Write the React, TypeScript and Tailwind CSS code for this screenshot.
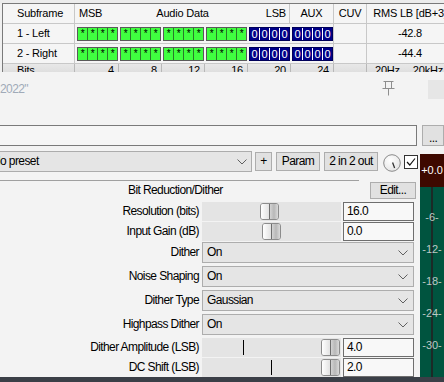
import React from "react";

const TF = "font-['Liberation_Sans',Arial,sans-serif]";

function BitGroup({ kind }: { kind: "g" | "b" }) {
  const green = kind === "g";
  return (
    <div
      className={`flex h-[14px] w-[41px] border ${
        green ? "border-[#5a5a5a]" : "border-[#00005a]"
      }`}
    >
      {[0, 1, 2, 3].map((i) => (
        <div
          key={i}
          className={`flex-1 flex justify-center ${
            i > 0 ? (green ? "border-l border-[#2a7a2a]" : "border-l border-white") : ""
          } ${
            green
              ? "bg-[#40ff40] text-black text-[10px] leading-[11px]"
              : "bg-[#000088] text-white text-[11px] leading-[12px]"
          }`}
        >
          {green ? "*" : "0"}
        </div>
      ))}
    </div>
  );
}

function DataRow({ name, rms }: { name: string; rms: string }) {
  return (
    <div className="flex h-[20px] border-b border-[#c8c8c8]">
      <div className="w-[72px] border-r border-[#c8c8c8] flex items-center pl-[14px]">{name}</div>
      <div className="w-[259px] border-r border-[#c8c8c8] flex items-center pl-[2px] gap-[2px]">
        <BitGroup kind="g" />
        <BitGroup kind="g" />
        <BitGroup kind="g" />
        <BitGroup kind="g" />
        <BitGroup kind="b" />
        <BitGroup kind="b" />
      </div>
      <div className="w-[33px] border-r border-[#c8c8c8]" />
      <div className="w-[86px] flex items-center justify-center">{rms}</div>
    </div>
  );
}

function Chevron() {
  return (
    <svg width="10" height="6" viewBox="0 0 10 6" className="shrink-0">
      <polyline points="0.5,0.5 5,5 9.5,0.5" fill="none" stroke="#606060" strokeWidth="1" />
    </svg>
  );
}

function Thumb({ left }: { left: number }) {
  return (
    <div
      className="absolute top-[1px] w-[19px] h-[17px] rounded-[3px] border border-[#8c8c8c] flex overflow-hidden"
      style={{ left }}
    >
      <div className="flex-1 bg-gradient-to-r from-[#ffffff] to-[#e2e2e2]" />
      <div className="w-[1px] bg-[#6e6e6e]" />
      <div className="flex-1 bg-gradient-to-r from-[#d4d4d4] via-[#b8b8b8] to-[#dadada]" />
    </div>
  );
}

function SliderRow({
  label,
  value,
  thumb,
  tick,
  mt,
}: {
  label: string;
  value: string;
  thumb: number;
  tick?: number;
  mt: string;
}) {
  return (
    <div className={`flex h-[19px] items-center ${mt}`}>
      <div className="w-[199px] text-right whitespace-nowrap leading-[19px]">{label}</div>
      <div className="ml-[3px] w-[139px] h-[19px] bg-[#e4e4e4] relative">
        {tick !== undefined && (
          <div className="absolute top-[2px] h-[15px] w-[1px] bg-black" style={{ left: tick }} />
        )}
        <Thumb left={thumb} />
      </div>
      <div className="ml-[2px] w-[71px] h-[19px] border border-[#6e6e6e] bg-[#f8f8f8] pl-[3px] leading-[17px]">
        {value}
      </div>
    </div>
  );
}

function SelectRow({ label, value, mt }: { label: string; value: string; mt: string }) {
  return (
    <div className={`flex h-[21px] items-center ${mt}`}>
      <div className="w-[199px] text-right whitespace-nowrap leading-[21px]">{label}</div>
      <div className="ml-[3px] w-[212px] h-[21px] border border-[#adadad] bg-[#e5e5e5] pl-[4px] pr-[5px] flex items-center justify-between">
        <span className="leading-[19px]">{value}</span>
        <Chevron />
      </div>
    </div>
  );
}

function Btn({ children, w, cls = "" }: { children: React.ReactNode; w: string; cls?: string }) {
  return (
    <div
      className={`${w} h-[19px] border border-[#adadad] bg-[#e1e1e1] flex items-center justify-center leading-[17px] whitespace-nowrap ${cls}`}
    >
      {children}
    </div>
  );
}

export default function App() {
  return (
    <div className={`w-[444px] h-[382px] overflow-hidden bg-[#f3f3f3] ${TF} text-black`}>
      {/* Top table */}
      <div className="h-[72px] overflow-hidden bg-[#f0f0f0]">
        <div className="h-[3px] bg-[#ececec]" />
        <div className="ml-[2px] w-[520px] border-l border-t border-[#7a7a7a] text-[11px] tracking-[-0.2px] bg-[#f5f5f5]">
          <div className="flex h-[20px] border-b border-[#c8c8c8]">
            <div className="w-[72px] border-r border-[#c8c8c8] flex items-center pl-[14px]">Subframe</div>
            <div className="w-[215px] border-r border-[#c8c8c8] flex items-center px-[3px]">
              <span className="flex-1 pl-[1px]">MSB</span>
              <span>Audio Data</span>
              <span className="flex-1 text-right">LSB</span>
            </div>
            <div className="w-[44px] border-r border-[#c8c8c8] flex items-center justify-center">AUX</div>
            <div className="w-[33px] border-r border-[#c8c8c8] flex items-center justify-center">CUV</div>
            <div className="w-[86px] flex items-center justify-center whitespace-nowrap">RMS LB [dB+3]</div>
          </div>
          <DataRow name="1 - Left" rms="-42.8" />
          <DataRow name="2 - Right" rms="-44.4" />
          <div className="flex h-[14px] bg-gradient-to-b from-[#e8e8e8] to-[#d8d8d8] leading-[13px]">
            <div className="w-[72px] border-r border-[#b8b8b8] pl-[14px]">Bits</div>
            <div className="w-[44px] border-r border-[#b8b8b8] text-right pr-[4px]">4</div>
            <div className="w-[43px] border-r border-[#b8b8b8] text-right pr-[4px]">8</div>
            <div className="w-[43px] border-r border-[#b8b8b8] text-right pr-[4px]">12</div>
            <div className="w-[43px] border-r border-[#b8b8b8] text-right pr-[4px]">16</div>
            <div className="w-[43px] border-r border-[#b8b8b8] text-right pr-[4px]">20</div>
            <div className="w-[43px] border-r border-[#b8b8b8] text-right pr-[4px]">24</div>
            <div className="w-[33px] border-r border-[#b8b8b8]" />
            <div className="w-[86px] flex justify-between pl-[8px] pr-[10px]">
              <span>20Hz</span>
              <span>20kHz</span>
            </div>
          </div>
        </div>
      </div>

      {/* Plugin window */}
      <div className="h-[310px] flex flex-col bg-[#f3f3f3] text-[12px] tracking-[-0.6px]">
        <div className="h-[34px] flex items-start">
          <div className="w-[60px] mt-[10px] leading-[14px] text-[#a0aab8]">2022"</div>
          <svg className="ml-[321px] mt-[8px]" width="15" height="16" viewBox="0 0 15 16">
            <g fill="none" stroke="#8e8e8e" strokeWidth="1">
              <path d="M2.5 1.5 H12.5" />
              <path d="M4.5 1.5 V8.5 M10.5 1.5 V8.5" />
              <path d="M1.5 8.5 H13.5" />
              <path d="M7.5 8.5 V15.5" />
            </g>
          </svg>
          <div className="ml-[32px] mt-[8px] w-[16px] h-[19px] bg-[#e6e6e6]" />
        </div>

        <div className="mt-[19px] flex h-[21px]">
          <div className="-ml-[2px] w-[425px] h-[21px] border border-[#7a7a7a] bg-[#f6f6f6]" />
          <div className="ml-[5px] w-[22px] h-[21px] border border-[#adadad] bg-[#e1e1e1] flex items-end justify-center leading-[14px]">
            ...
          </div>
        </div>

        <div className="mt-[5px] flex">
          <div className="w-[420px] flex flex-col">
            <div className="flex h-[21px] items-start">
              <div className="-ml-[12px] w-[264px] h-[21px] border border-[#acacac] bg-[#e5e5e5] pl-[3px] pr-[4px] flex items-center justify-between">
                <span className="leading-[19px]">No preset</span>
                <Chevron />
              </div>
              <Btn w="w-[17px]" cls="ml-[3px] mt-[1px]">+</Btn>
              <Btn w="w-[44px]" cls="ml-[4px] mt-[1px]">Param</Btn>
              <Btn w="w-[54px]" cls="ml-[4px] mt-[1px]">2 in 2 out</Btn>
              <svg className="ml-[5px] mt-[3px]" width="18" height="18" viewBox="0 0 18 18">
                <defs>
                  <radialGradient id="kg" cx="40%" cy="35%" r="70%">
                    <stop offset="0%" stopColor="#ffffff" />
                    <stop offset="100%" stopColor="#e4e4e4" />
                  </radialGradient>
                </defs>
                <circle cx="9" cy="9" r="8.3" fill="url(#kg)" stroke="#8a8a8a" strokeWidth="1" />
                <line x1="9.6" y1="8.6" x2="11.6" y2="14" stroke="#303030" strokeWidth="1.3" />
              </svg>
              <div className="ml-[3px] mt-[4px] w-[14px] h-[14px] border border-[#333333] bg-white">
                <svg width="12" height="12" viewBox="0 0 12 12">
                  <polyline points="2,6 4.8,9 10,2.5" fill="none" stroke="#111" strokeWidth="1.2" />
                </svg>
              </div>
            </div>

            <div className="mt-[8px] h-[1px] w-[359px] bg-[#a0a0a0]" />

            <div className="flex h-[19px] items-start">
              <div className="ml-[128px] leading-[19px] whitespace-nowrap">Bit Reduction/Dither</div>
              <div className="ml-auto mr-[4px] mt-[1px] w-[46px] h-[17px] border border-[#adadad] bg-[#e1e1e1] flex items-center justify-center leading-[15px]">
                Edit...
              </div>
            </div>

            <SliderRow label="Resolution (bits)" value="16.0" thumb={58} mt="mt-[2px]" />
            <SliderRow label="Input Gain (dB)" value="0.0" thumb={60} mt="mt-[1px]" />
            <SelectRow label="Dither" value="On" mt="mt-[1px]" />
            <SelectRow label="Noise Shaping" value="On" mt="mt-[3px]" />
            <SelectRow label="Dither Type" value="Gaussian" mt="mt-[3px]" />
            <SelectRow label="Highpass Dither" value="On" mt="mt-[3px]" />
            <SliderRow label="Dither Amplitude (LSB)" value="4.0" thumb={119} tick={41} mt="mt-[3px]" />
            <SliderRow label="DC Shift (LSB)" value="2.0" thumb={119} tick={69} mt="mt-[1px]" />
          </div>

          <div className="mt-[3px] w-[24px] h-[223px] flex flex-col tracking-normal">
            <div className="h-[33px] bg-[#3e0900] flex items-center justify-center text-white text-[11px]">
              +0.0
            </div>
            <div className="flex-1 bg-[#00543f] relative flex flex-col items-center pt-[23px] gap-[18px] text-[#bcc8c4] text-[11px]">
              <div className="absolute left-[11px] top-0 bottom-0 w-[2px] bg-[#1c2a27]" />
              <span className="relative leading-[14px]">-6-</span>
              <span className="relative leading-[14px]">-12-</span>
              <span className="relative leading-[14px]">-18-</span>
              <span className="relative leading-[14px]">-24-</span>
              <span className="relative leading-[14px]">-30-</span>
            </div>
          </div>
        </div>

        <div className="h-[5px] bg-[#3b3f47]" />
      </div>
    </div>
  );
}
